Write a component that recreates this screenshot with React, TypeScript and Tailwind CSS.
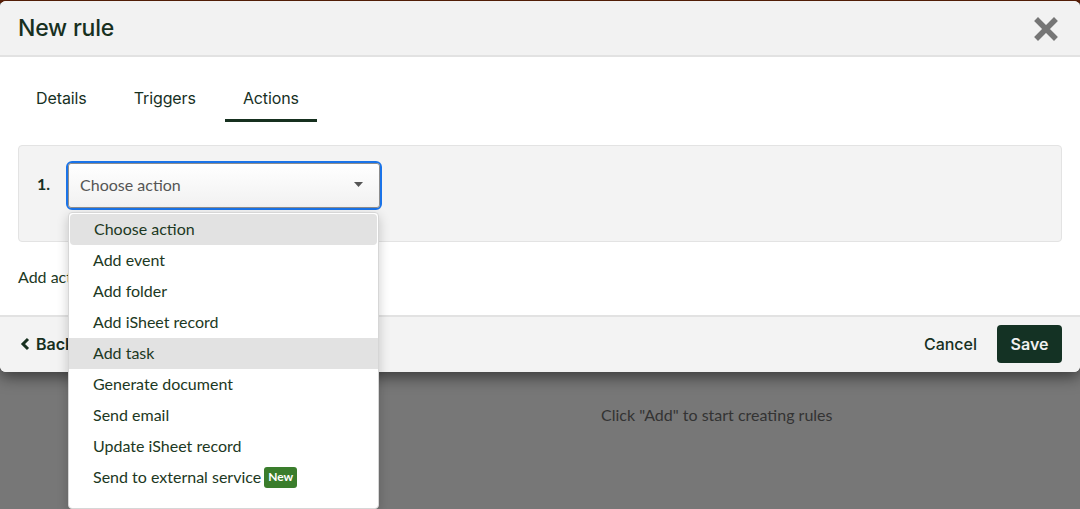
import React from "react";

const actions = [
  "Choose action",
  "Add event",
  "Add folder",
  "Add iSheet record",
  "Add task",
  "Generate document",
  "Send email",
  "Update iSheet record",
  "Send to external service",
];

const tabs = ["Details", "Triggers", "Actions"];

function CloseIcon() {
  return (
    <svg width="24" height="24" viewBox="0 0 24 24" className="text-[#767676]">
      <path d="M4 4 L20 20 M20 4 L4 20" stroke="currentColor" strokeWidth="5.5" strokeLinecap="square" fill="none" />
    </svg>
  );
}

function ActionMenu() {
  return (
    <div className="absolute left-[68px] top-[212px] w-[311px] h-[297px] bg-white rounded-[4px] border border-[#d6d6d6] shadow-[0_4px_12px_rgba(0,0,0,0.2)] font-['Lato',sans-serif] text-[16px] text-[#1c3823]">
      {actions.map((a, i) => {
        const hl = i === 0 || i === 4;
        return (
          <div
            key={a}
            className={`h-[31px] flex items-center pl-[24px] pb-px ${hl ? "bg-[#e2e2e2]" : ""} ${i === 0 ? "rounded-[4px] mx-px mt-px" : ""}`}
          >
            {a}
            {i === 8 && (
              <span className="ml-[3px] px-[4px] h-[21px] flex items-center rounded-[3px] bg-[#3a7d2c] text-white text-[12px] font-bold">
                New
              </span>
            )}
          </div>
        );
      })}
    </div>
  );
}

export default function App() {
  return (
    <div className="relative w-full h-[509px] bg-[#777777] overflow-hidden">
      {/* page behind the backdrop */}
      <div className="h-[3px] bg-[#5e2209]" />
      <div className="pt-[400px] pl-[601px] font-['Lato',sans-serif] text-[16px] text-[#333333]">
        Click "Add" to start creating rules
      </div>

      {/* modal */}
      <div className="absolute left-0 right-0 top-px rounded-[6px] bg-white shadow-[0_5px_15px_rgba(0,0,0,0.5)] text-[#17301f]">
        <div className="h-[56px] flex items-center justify-between px-[18px] bg-[#f2f2f2] border-b-2 border-[#e2e2e2] rounded-t-[6px]">
          <div className="font-['Inter',sans-serif] text-[23px] font-medium tracking-[-0.2px]">New rule</div>
          <div className="pr-[4px] pt-[1px]">
            <CloseIcon />
          </div>
        </div>

        <div className="px-[18px] pt-[20px] flex gap-[11px] font-['Inter',sans-serif] text-[16px] tracking-[-0.1px]">
          {tabs.map((t) => (
            <div
              key={t}
              className={`h-[45px] px-[18px] flex items-center border-b-[3px] ${t === "Actions" ? "border-[#16301f]" : "border-transparent"}`}
            >
              {t}
            </div>
          ))}
        </div>

        <div className="mx-[18px] mt-[23px] h-[97px] rounded-[4px] border border-[#e3e3e3] bg-[#f3f3f3] pl-[18px] pt-[15px] flex items-start gap-[16px]">
          <div className="h-[49px] flex items-center font-['Lato',sans-serif] font-bold text-[16px] pb-[4px]">1.</div>
          <div className="rounded-[6px] border-2 border-[#1a73e8]">
            <div className="w-[312px] h-[45px] rounded-[3px] border border-[#8d8d8d] bg-gradient-to-b from-white to-[#f1f1f1] flex items-center justify-between pl-[11px] pr-[16px] pb-[2px] font-['Lato',sans-serif] text-[16px] text-[#555555]">
              Choose action
              <svg width="9" height="5" viewBox="0 0 9 5">
                <path d="M0 0 H9 L4.5 5 Z" fill="#555555" />
              </svg>
            </div>
          </div>
        </div>

        <div className="h-[73px] flex items-center px-[18px] pb-[4px] font-['Lato',sans-serif] text-[16px] text-[#1c3823]">
          Add action
        </div>

        <div className="h-[57px] flex items-center justify-between pl-[20px] pr-[18px] pb-[2px] bg-[#f3f3f3] border-t-2 border-[#e2e2e2] rounded-b-[6px] font-['Inter',sans-serif] text-[16px]">
          <div className="flex items-center gap-[6px] font-semibold">
            <svg width="10" height="14" viewBox="0 0 10 14">
              <path d="M8 2 L3 7 L8 12" stroke="currentColor" strokeWidth="3" fill="none" />
            </svg>
            Back
          </div>
          <div className="flex items-center gap-[20px]">
            <div className="font-medium">Cancel</div>
            <div className="w-[65px] h-[38px] rounded-[4px] bg-[#143224] text-[#f0f0f0] font-semibold flex items-center justify-center">
              Save
            </div>
          </div>
        </div>
      </div>

      <ActionMenu />
    </div>
  );
}
